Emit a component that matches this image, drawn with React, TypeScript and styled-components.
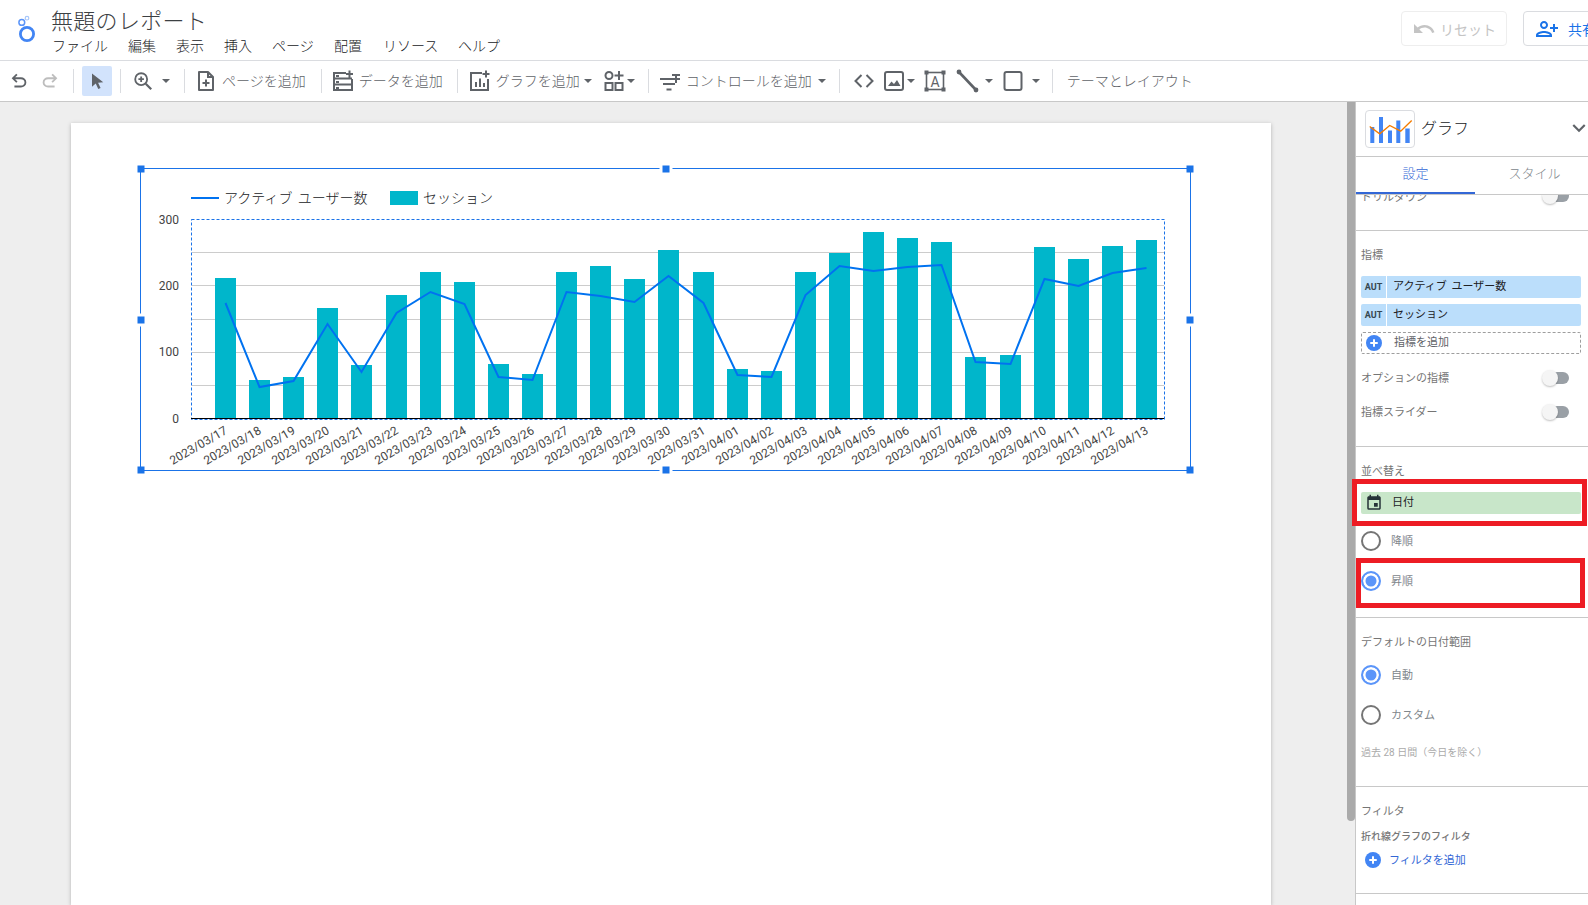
import * as React from 'react'
import styled, { createGlobalStyle } from 'styled-components'
import { MdEvent, MdKeyboardArrowDown, MdOutlinePersonAddAlt1 } from 'react-icons/md'

const GlobalStyle = createGlobalStyle`
  html, body {
    margin: 0;
    padding: 0;
    background: #eeeeee;
    font-family: Roboto, "Noto Sans CJK JP", sans-serif;
  }
`

const Root = styled.div`
  position: relative;
  width: 1588px;
  height: 905px;
  overflow: hidden;
  display: flex;
  flex-direction: column;
  background: #eeeeee;
`

const Header = styled.header`
  height: 60px;
  flex-shrink: 0;
  display: flex;
  background: #fff;
  border-bottom: 1px solid #dadce0;
`

const LogoSlot = styled.div`
  width: 51px;
  flex-shrink: 0;
  padding: 14px 0 0 15px;
  box-sizing: border-box;
`

const TitleBlock = styled.div`
  display: flex;
  flex-direction: column;
  padding-top: 8px;
`

const Title = styled.div`
  font-size: 22px;
  line-height: 28px;
  letter-spacing: 0.3px;
  color: #3c4043;
  font-weight: 300;
`

const MenuBar = styled.nav`
  display: flex;
  margin: 0 0 0 1px;
`

const MenuItem = styled.span<{ $w: number }>`
  width: ${p => p.$w}px;
  font-size: 14px;
  line-height: 20px;
  color: #202124;
  font-weight: 300;
`

const HeaderActions = styled.div`
  margin-left: auto;
  display: flex;
  gap: 16px;
  padding-top: 11px;
  margin-right: -20px;
`

const ResetButton = styled.div`
  width: 106px;
  height: 35px;
  box-sizing: border-box;
  border: 1px solid #eeeeee;
  border-radius: 4px;
  display: flex;
  align-items: center;
  justify-content: center;
  gap: 4px;
  color: #c4c4c4;
  font-size: 14px;
`

const ShareButton = styled.div`
  width: 85px;
  height: 35px;
  box-sizing: border-box;
  border: 1px solid #dadce0;
  border-radius: 4px;
  display: flex;
  align-items: center;
  gap: 9px;
  padding-left: 11px;
  color: #1a73e8;
  font-size: 14px;
  white-space: nowrap;
`

const Toolbar = styled.div`
  height: 40px;
  flex-shrink: 0;
  display: flex;
  align-items: center;
  padding-left: 4px;
  background: #fff;
  border-bottom: 1px solid #c8c8c8;
`

const Sep = styled.span<{ $l: number; $r: number }>`
  width: 1px;
  height: 24px;
  flex-shrink: 0;
  background: #dadce0;
  margin: 0 ${p => p.$r}px 0 ${p => p.$l}px;
`

const IconSlot = styled.span<{ $w?: number; $ml?: number; $active?: boolean; $muted?: boolean }>`
  width: ${p => p.$w ?? 20}px;
  height: 30px;
  margin-left: ${p => p.$ml ?? 0}px;
  flex-shrink: 0;
  display: flex;
  align-items: center;
  justify-content: center;
  color: ${p => (p.$muted ? '#bdbdbd' : '#5f6368')};
  border-radius: 2px;
  background: ${p => (p.$active ? '#d2e3fc' : 'transparent')};
  svg {
    flex-shrink: 0;
  }
`

const ToolLabel = styled.span<{ $ml: number }>`
  margin-left: ${p => p.$ml}px;
  font-size: 14px;
  line-height: 20px;
  color: #5f6368;
  font-weight: 300;
  white-space: nowrap;
`

const Caret = styled.span<{ $ml: number }>`
  width: 0;
  height: 0;
  flex-shrink: 0;
  margin-left: ${p => p.$ml}px;
  border-left: 4px solid transparent;
  border-right: 4px solid transparent;
  border-top: 4px solid #5f6368;
`

const Main = styled.main`
  flex: 1;
  min-height: 0;
  display: flex;
`

const Canvas = styled.div`
  width: 1347px;
  flex-shrink: 0;
  box-sizing: border-box;
  padding: 21px 0 0 71px;
  display: flex;
`

const ReportPage = styled.div`
  width: 1200px;
  box-sizing: border-box;
  padding: 45px 0 0 69px;
  background: #fff;
  box-shadow: 0 1px 4px rgba(0, 0, 0, 0.25);
`

const Widget = styled.div`
  position: relative;
  width: 1051px;
  height: 303px;
  box-sizing: border-box;
  border: 1px solid #1a73e8;
`

const Handle = styled.span<{ $x: number; $y: number; $edge?: boolean }>`
  position: absolute;
  left: ${p => p.$x * 100}%;
  top: ${p => p.$y * 100}%;
  width: 7px;
  height: 7px;
  transform: translate(-50%, -50%);
  background: #1a73e8;
  box-shadow: 0 0 0 ${p => (p.$edge ? 3 : 0)}px #fff;
`

const ChartSvg = styled.svg`
  position: absolute;
  left: -1px;
  top: -1px;
  display: block;
  font-family: Roboto, "Noto Sans CJK JP", sans-serif;
`

const ScrollTrack = styled.div`
  width: 8px;
  flex-shrink: 0;
`

const ScrollThumb = styled.div`
  width: 8px;
  height: 719px;
  background: #aaaaaa;
  border-radius: 0 0 4px 4px;
`

const Panel = styled.aside`
  flex: 1;
  min-width: 0;
  display: flex;
  flex-direction: column;
  background: #fff;
  border-left: 1px solid #c8c8c8;
`

const PanelHead = styled.div`
  height: 55px;
  flex-shrink: 0;
  box-sizing: border-box;
  display: flex;
  align-items: center;
  padding-left: 9px;
  gap: 6px;
  border-bottom: 1px solid #c8c8c8;
`

const ChartThumb = styled.span`
  width: 50px;
  height: 38px;
  box-sizing: border-box;
  border: 1px solid #dadce0;
  border-radius: 4px;
  display: block;
`

const PanelTitle = styled.span`
  margin-top: -4px;
  color: #202124;
  font-size: 16px;
  font-weight: 300;
`

const Chevron = styled.span`
  margin: -2px -4px 0 auto;
  display: flex;
  color: #5f6368;
`

const Tabs = styled.div`
  height: 37px;
  flex-shrink: 0;
  display: flex;
  overflow: hidden;
  border-bottom: 1px solid #c8c8c8;
`

const Tab = styled.div<{ $active?: boolean }>`
  width: 119px;
  height: 37px;
  flex-shrink: 0;
  box-sizing: border-box;
  padding-top: 7px;
  text-align: center;
  font-size: 13px;
  line-height: 20px;
  font-weight: 300;
  color: ${p => (p.$active ? '#3367d6' : '#80868b')};
  border-bottom: 2px solid ${p => (p.$active ? '#3367d6' : 'transparent')};
`

const PanelBody = styled.div`
  flex: 1;
  min-height: 0;
  overflow: hidden;
`

const Section = styled.section<{ $pb: number }>`
  padding: 16px 7px ${p => p.$pb}px 5px;
  border-bottom: 1px solid #c8c8c8;
`

const DrillSection = styled.section`
  padding: 0 7px 24px 5px;
  border-bottom: 1px solid #c8c8c8;
  & > div {
    margin-top: -9px;
  }
`

const SectionLabel = styled.div`
  padding-top: 1px;
  margin-bottom: -1px;
  font-size: 11px;
  line-height: 16px;
  color: #757575;
`

const SubLabel = styled.div`
  margin-top: 10px;
  margin-bottom: -1px;
  font-size: 10px;
  line-height: 16px;
  color: #757575;
  font-weight: 500;
`

const Chip = styled.div<{ $mt: number; $bg: string }>`
  margin-top: ${p => p.$mt}px;
  height: 22px;
  display: flex;
  align-items: center;
  background: ${p => p.$bg};
  border-radius: 2px;
  font-size: 11px;
  color: #202124;
`

const ChipType = styled.span`
  width: 25px;
  height: 22px;
  flex-shrink: 0;
  display: flex;
  align-items: center;
  justify-content: center;
  border-right: 1px solid #fff;
  color: #37474f;
  font-size: 9px;
  font-weight: 700;
`

const ChipName = styled.span`
  margin-left: 6px;
  padding-bottom: 5px;
  word-spacing: 2px;
`

const ChipIcon = styled.span`
  width: 25px;
  flex-shrink: 0;
  display: flex;
  align-items: center;
  justify-content: center;
  color: #263238;
`

const AddRow = styled.div`
  margin-top: 6px;
  height: 22px;
  box-sizing: border-box;
  display: flex;
  align-items: center;
  padding: 0 0 0 4px;
  gap: 12px;
  border: 1px dashed #9e9e9e;
  border-radius: 2px;
  font-size: 11px;
  color: #5f6368;
  span:last-child {
    padding-bottom: 5px;
  }
`

const RowText = styled.span`
  padding-bottom: 3px;
`

const PlusDisc = styled.span`
  position: relative;
  width: 16px;
  height: 16px;
  flex-shrink: 0;
  border-radius: 50%;
  background: #4285f4;
  &::before, &::after {
    content: '';
    position: absolute;
    background: #fff;
    border-radius: 1px;
  }
  &::before {
    left: 4px;
    top: 7px;
    width: 8px;
    height: 2px;
  }
  &::after {
    left: 7px;
    top: 4px;
    width: 2px;
    height: 8px;
  }
`

const ToggleRow = styled.div<{ $mt: number }>`
  margin-top: ${p => p.$mt}px;
  height: 20px;
  display: flex;
  align-items: center;
  justify-content: space-between;
  padding-right: 12px;
  font-size: 11px;
  color: #757575;
`

const Toggle = styled.span`
  position: relative;
  width: 22px;
  height: 12px;
  border-radius: 6px;
  background: #9aa0a6;
  &::after {
    content: '';
    position: absolute;
    left: -5px;
    top: -2px;
    width: 16px;
    height: 16px;
    border-radius: 50%;
    background: #f5f5f5;
    box-shadow: 0 1px 2px rgba(0, 0, 0, 0.25);
  }
`

const RadioRow = styled.div<{ $mt: number }>`
  margin-top: ${p => p.$mt}px;
  height: 20px;
  display: flex;
  align-items: center;
  gap: 10px;
  font-size: 11px;
  color: #80868b;
`

const Radio = styled.span<{ $on?: boolean }>`
  width: 20px;
  height: 20px;
  box-sizing: border-box;
  flex-shrink: 0;
  border-radius: 50%;
  border: 2px solid ${p => (p.$on ? '#5b95f9' : '#757575')};
  background: ${p => (p.$on ? '#5b95f9' : '#fff')};
  box-shadow: ${p => (p.$on ? 'inset 0 0 0 2.5px #fff' : 'none')};
`

const Note = styled.div`
  margin-top: 20px;
  margin-bottom: -1px;
  font-size: 10px;
  line-height: 16px;
  color: #aaaaaa;
  white-space: nowrap;
`

const FilterAdd = styled.div`
  margin-top: 6px;
  height: 20px;
  display: flex;
  align-items: center;
  gap: 8px;
  padding-left: 4px;
  font-size: 11px;
  color: #3367d6;
`

const Annotation = styled.div<{ $x: number; $y: number; $w: number; $h: number }>`
  position: absolute;
  left: ${p => p.$x}px;
  top: ${p => p.$y}px;
  width: ${p => p.$w}px;
  height: ${p => p.$h}px;
  box-sizing: border-box;
  border: 5px solid #ed1c24;
`

const Icon = ({ size = 22, children }: { size?: number; children: React.ReactNode }) => (
  <svg width={size} height={size} viewBox="0 0 24 24" fill="currentColor">{children}</svg>
)

const UNDO = 'M7 19v-2h7.1q1.575 0 2.738-1T18 13.5 16.838 11 14.1 10H7.8l2.6 2.6L9 14 4 9l5-5 1.4 1.4L7.8 8h6.3q2.425 0 4.163 1.575T20 13.5t-1.737 3.925T14.1 19z'

const Line = styled.path`
  fill: none;
  stroke: currentColor;
  stroke-width: 2;
`

const barTops = [278, 380, 377, 308, 365, 295, 272, 282, 364, 374, 272, 266, 279, 250, 272, 369, 371, 272, 253, 232, 238, 242, 357, 355, 247, 259, 246, 240]
const lineYs = [303, 387, 381, 324, 372, 313, 292, 304, 377, 380, 292, 296, 302, 276, 303, 375, 377, 295, 266, 271, 267, 265, 362, 364, 279, 286, 273, 268]
const dates = [
  ...Array.from({ length: 15 }, (_, i) => `2023/03/${i + 17}`),
  ...Array.from({ length: 13 }, (_, i) => `2023/04/${String(i + 1).padStart(2, '0')}`),
]
const barLeft = (i: number) => Math.round(215 + i * 34.11)

function ComboChart() {
  const points = lineYs.map((y, i) => `${barLeft(i) + 10.5},${y}`).join(' ')
  return (
    <ChartSvg width={1051} height={303} viewBox="140 168 1051 303">
      <line x1={191} x2={219} y1={198} y2={198} stroke="#0072f0" strokeWidth={2} />
      <text x={224} y={203} fontSize={14} fontWeight={300} wordSpacing={2} fill="#202124">アクティブ ユーザー数</text>
      <rect x={390} y={191} width={28} height={14} fill="#00b6cb" />
      <text x={423} y={203} fontSize={14} fontWeight={300} fill="#202124">セッション</text>

      {[252.5, 285.5, 319.5, 352.5, 385.5].map(y => (
        <line key={y} x1={192} x2={1164} y1={y} y2={y} stroke="#cccccc" />
      ))}
      {[['300', 224], ['200', 290], ['100', 356], ['0', 423]].map(([t, y]) => (
        <text key={t} x={179} y={y} textAnchor="end" fontSize={12} fill="#444">{t}</text>
      ))}
      {barTops.map((top, i) => (
        <rect key={i} x={barLeft(i)} y={top} width={21} height={418 - top} fill="#00b6cb" />
      ))}
      <rect x={191.5} y={219.5} width={973} height={200} fill="none" stroke="#1a73e8" strokeDasharray="3 2" />
      <line x1={191} x2={1164} y1={418.5} y2={418.5} stroke="#000" />
      <polyline points={points} fill="none" stroke="#0072f0" strokeWidth={2} />
      {dates.map((d, i) => {
        const x = barLeft(i) + 13
        return (
          <text key={d} x={x} y={433} textAnchor="end" fontSize={12} fill="#444" transform={`rotate(-30 ${x} 433)`}>{d}</text>
        )
      })}
    </ChartSvg>
  )
}

const menu: [string, number][] = [['ファイル', 76], ['編集', 48], ['表示', 48], ['挿入', 48], ['ページ', 62], ['配置', 49], ['リソース', 75], ['ヘルプ', 50]]

export default function App() {
  return (
    <Root>
      <GlobalStyle />
      <Header>
        <LogoSlot>
          <svg width={24} height={28} viewBox="0 0 24 28" fill="none">
            <circle cx={12} cy={20} r={6.6} stroke="#4285f4" strokeWidth={2.8} />
            <circle cx={6.8} cy={8.4} r={2.9} stroke="#5b95f9" strokeWidth={1.5} />
            <circle cx={12} cy={4.2} r={1.8} stroke="#a8c7fa" strokeWidth={1.2} />
          </svg>
        </LogoSlot>
        <TitleBlock>
          <Title>無題のレポート</Title>
          <MenuBar>
            {menu.map(([t, w]) => <MenuItem key={t} $w={w}>{t}</MenuItem>)}
          </MenuBar>
        </TitleBlock>
        <HeaderActions>
          <ResetButton>
            <Icon size={24}><path d="M12.5 8c-2.65 0-5.05.99-6.9 2.6L2 7v9h9l-3.62-3.62c1.39-1.16 3.16-1.88 5.12-1.88 3.54 0 6.55 2.31 7.6 5.5l2.37-.78C21.08 11.03 17.15 8 12.5 8z" /></Icon>
            リセット
          </ResetButton>
          <ShareButton>
            <MdOutlinePersonAddAlt1 size={24} />
            共有
          </ShareButton>
        </HeaderActions>
      </Header>

      <Toolbar>
        <IconSlot $w={30}><Icon><path d={UNDO} /></Icon></IconSlot>
        <IconSlot $w={30} $ml={1} $muted><Icon><g transform="matrix(-1 0 0 1 24 0)"><path d={UNDO} /></g></Icon></IconSlot>
        <Sep $l={8} $r={8} />
        <IconSlot $w={30} $active><Icon size={20}><path d="M6 3l0 16 4.5-4 3 6.5 2.8-1.2-3-6.3 6.2-.5z" /></Icon></IconSlot>
        <Sep $l={8} $r={10} />
        <IconSlot $w={24}>
          <Icon>
            <circle cx={10} cy={10} r={6.5} fill="none" stroke="currentColor" strokeWidth={2} />
            <path d="M15 15l6 6" stroke="currentColor" strokeWidth={2.4} />
            <path d="M7 10h6M10 7v6" stroke="currentColor" strokeWidth={2} />
          </Icon>
        </IconSlot>
        <Caret $ml={7} />
        <Sep $l={14} $r={11} />
        <IconSlot>
          <Icon size={24}>
            <Line d="M5 3h9l5 5v13H5z" strokeLinejoin="round" />
            <Line d="M14 3v5h5M12 10.5v7M8.5 14h7" />
          </Icon>
        </IconSlot>
        <ToolLabel $ml={6}>ページを追加</ToolLabel>
        <Sep $l={15} $r={11} />
        <IconSlot>
          <Icon size={24}>
            <Line d="M15 4H3v17h18V10M3 9.5h18M3 15.5h18M18.5 1.5v7M15 5h7" />
            <path d="M5 6h3v2H5zM5 12h3v2H5zM5 18h3v2H5z" />
          </Icon>
        </IconSlot>
        <ToolLabel $ml={6}>データを追加</ToolLabel>
        <Sep $l={14} $r={12} />
        <IconSlot>
          <Icon size={24}>
            <Line d="M14 4H3v17h17V10M18 1.5v7M14.5 5h7" />
            <path d="M7 13h2v5H7zM11 9.5h2V18h-2zM15 14h2v4h-2z" />
          </Icon>
        </IconSlot>
        <ToolLabel $ml={6}>グラフを追加</ToolLabel>
        <Caret $ml={4} />
        <IconSlot $ml={12}>
          <Icon size={24}>
            <circle cx={7} cy={6.5} r={3.5} fill="none" stroke="currentColor" strokeWidth={2} />
            <Line d="M17 2v9M12.5 6.5h9" />
            <rect x={3.5} y={14} width={7} height={7} fill="none" stroke="currentColor" strokeWidth={2} />
            <rect x={13.5} y={14} width={7} height={7} fill="none" stroke="currentColor" strokeWidth={2} />
          </Icon>
        </IconSlot>
        <Caret $ml={3} />
        <Sep $l={13} $r={11} />
        <IconSlot>
          <Icon size={24}>
            <Line d="M2 10h20M5 15h12M8.5 20.5h5M18 5v9M14 6h8" />
          </Icon>
        </IconSlot>
        <ToolLabel $ml={6}>コントロールを追加</ToolLabel>
        <Caret $ml={6} />
        <Sep $l={13} $r={14} />
        <IconSlot>
          <Icon size={24}><Line d="M9.5 6L3.5 12l6 6M14.5 6l6 6-6 6" /></Icon>
        </IconSlot>
        <IconSlot $ml={10}>
          <Icon size={24}>
            <rect x={3} y={3} width={18} height={18} rx={2} fill="none" stroke="currentColor" strokeWidth={2} />
            <path d="M6 17l3.5-4.5 2.5 2.5 3-4 3.5 6z" />
          </Icon>
        </IconSlot>
        <Caret $ml={3} />
        <IconSlot $ml={10}>
          <Icon size={24}>
            <rect x={3.5} y={3.5} width={17} height={17} fill="none" stroke="currentColor" strokeWidth={1.6} />
            <path d="M1.5 1.5h4v4h-4zM18.5 1.5h4v4h-4zM1.5 18.5h4v4h-4zM18.5 18.5h4v4h-4z" />
            <text x={12} y={17.5} textAnchor="middle" fontSize={14} fontFamily="Roboto">A</text>
          </Icon>
        </IconSlot>
        <IconSlot $ml={12}>
          <Icon size={24}>
            <path d="M4 3l17 18" stroke="currentColor" strokeWidth={2.6} />
            <circle cx={4} cy={3} r={2.4} />
            <circle cx={21} cy={21} r={2.4} />
          </Icon>
        </IconSlot>
        <Caret $ml={8} />
        <IconSlot $ml={10}>
          <Icon size={24}><rect x={3.5} y={3} width={17} height={18} rx={2} fill="none" stroke="currentColor" strokeWidth={2} /></Icon>
        </IconSlot>
        <Caret $ml={9} />
        <Sep $l={12} $r={14} />
        <ToolLabel $ml={0}>テーマとレイアウト</ToolLabel>
      </Toolbar>

      <Main>
        <Canvas>
          <ReportPage>
            <Widget>
              <ComboChart />
              <Handle $x={0} $y={0} />
              <Handle $x={0.5} $y={0} $edge />
              <Handle $x={1} $y={0} />
              <Handle $x={0} $y={0.5} $edge />
              <Handle $x={1} $y={0.5} $edge />
              <Handle $x={0} $y={1} />
              <Handle $x={0.5} $y={1} $edge />
              <Handle $x={1} $y={1} />
            </Widget>
          </ReportPage>
        </Canvas>
        <ScrollTrack><ScrollThumb /></ScrollTrack>
        <Panel>
          <PanelHead>
            <ChartThumb>
              <svg width={48} height={36} viewBox="0 0 48 36">
                <path d="M4.3 16h4v16h-4zM13 6h4v26h-4zM22 19.5h4V32h-4zM30.3 9.5h4V32h-4zM39.3 17.5h4.4V32h-4.4z" fill="#4285f4" />
                <polyline points="3.7,15.5 13.7,22.8 23.7,14.5 34.7,20.2 45.7,9.5" fill="none" stroke="#f57c00" strokeWidth={1.4} />
              </svg>
            </ChartThumb>
            <PanelTitle>グラフ</PanelTitle>
            <Chevron><MdKeyboardArrowDown size={26} /></Chevron>
          </PanelHead>
          <Tabs>
            <Tab $active>設定</Tab>
            <Tab>スタイル</Tab>
          </Tabs>
          <PanelBody>
            <DrillSection>
              <ToggleRow $mt={0}>ドリルダウン<Toggle /></ToggleRow>
            </DrillSection>
            <Section $pb={24}>
              <SectionLabel>指標</SectionLabel>
              <Chip $mt={13} $bg="#bbdefb"><ChipType>AUT</ChipType><ChipName>アクティブ ユーザー数</ChipName></Chip>
              <Chip $mt={6} $bg="#bbdefb"><ChipType>AUT</ChipType><ChipName>セッション</ChipName></Chip>
              <AddRow><PlusDisc /><RowText>指標を追加</RowText></AddRow>
              <ToggleRow $mt={14}><RowText>オプションの指標</RowText><Toggle /></ToggleRow>
              <ToggleRow $mt={14}><RowText>指標スライダー</RowText><Toggle /></ToggleRow>
            </Section>
            <Section $pb={26}>
              <SectionLabel>並べ替え</SectionLabel>
              <Chip $mt={13} $bg="#c8e6c9"><ChipIcon><MdEvent size={18} /></ChipIcon><ChipName>日付</ChipName></Chip>
              <RadioRow $mt={17}><Radio /><RowText>降順</RowText></RadioRow>
              <RadioRow $mt={20}><Radio $on /><RowText>昇順</RowText></RadioRow>
            </Section>
            <Section $pb={26}>
              <SectionLabel>デフォルトの日付範囲</SectionLabel>
              <RadioRow $mt={15}><Radio $on /><RowText>自動</RowText></RadioRow>
              <RadioRow $mt={20}><Radio /><RowText>カスタム</RowText></RadioRow>
              <Note>過去 28 日間（今日を除く）</Note>
            </Section>
            <Section $pb={23}>
              <SectionLabel>フィルタ</SectionLabel>
              <SubLabel>折れ線グラフのフィルタ</SubLabel>
              <FilterAdd><PlusDisc /><RowText>フィルタを追加</RowText></FilterAdd>
            </Section>
          </PanelBody>
        </Panel>
      </Main>

      <Annotation $x={1352} $y={479} $w={235} $h={47} />
      <Annotation $x={1356} $y={558} $w={229} $h={50} />
    </Root>
  )
}
